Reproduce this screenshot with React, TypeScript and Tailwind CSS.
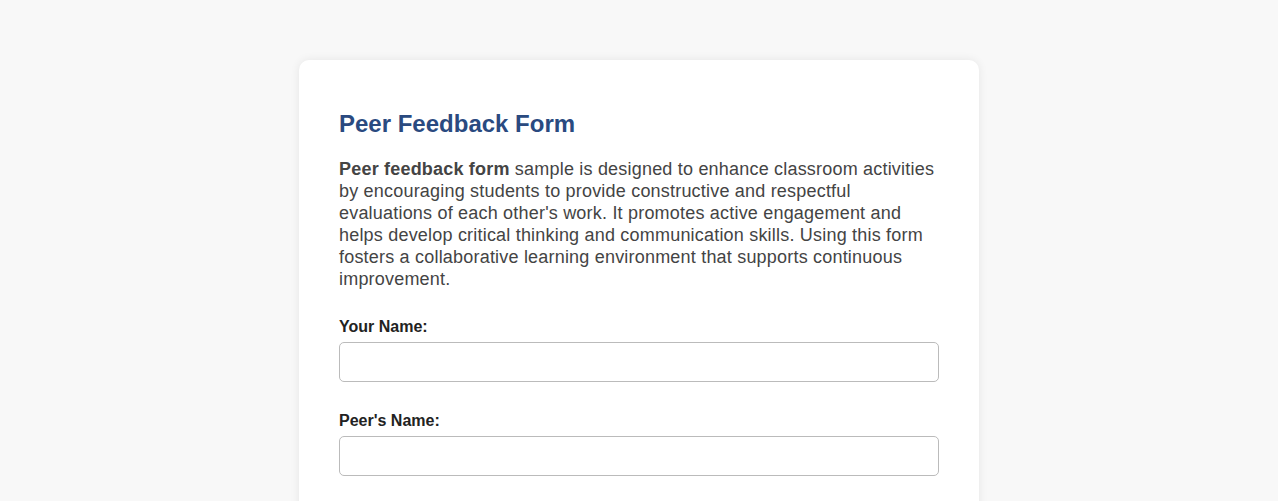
import React from "react";

const Field = ({ label, id }: { label: string; id: string }) => (
  <div className="mb-[29px]">
    <label htmlFor={id} className="block text-[16px] leading-[18px] font-bold text-[#222] pt-[1px] mb-[6px]">
      {label}
    </label>
    <input
      id={id}
      type="text"
      className="block w-full h-[40px] rounded-[5px] border border-[#bbb] bg-white px-3 outline-none"
    />
  </div>
);

export default function App() {
  return (
    <div
      className="min-h-screen bg-[#f8f8f8] pt-[60px]"
      style={{ fontFamily: '"Liberation Sans", Arial, sans-serif' }}
    >
      <div className="mx-auto w-[680px] rounded-[10px] bg-white px-[40px] pt-[50px] pb-10 shadow-[0_0_10px_rgba(0,0,0,0.08)]">
        <h2 className="text-[24px] leading-[28px] font-bold text-[#2a4a80]">Peer Feedback Form</h2>
        <p className="mt-[20px] text-[18px] leading-[22px] tracking-[0.2px] text-[#444]">
          <strong className="font-bold">Peer feedback form</strong> sample is designed to enhance classroom
          activities by encouraging students to provide constructive and respectful evaluations of each other's
          work. It promotes active engagement and helps develop critical thinking and communication skills. Using
          this form fosters a collaborative learning environment that supports continuous improvement.
        </p>
        <div className="mt-[27px]">
          <Field label="Your Name:" id="your-name" />
          <Field label="Peer's Name:" id="peer-name" />
        </div>
      </div>
    </div>
  );
}
